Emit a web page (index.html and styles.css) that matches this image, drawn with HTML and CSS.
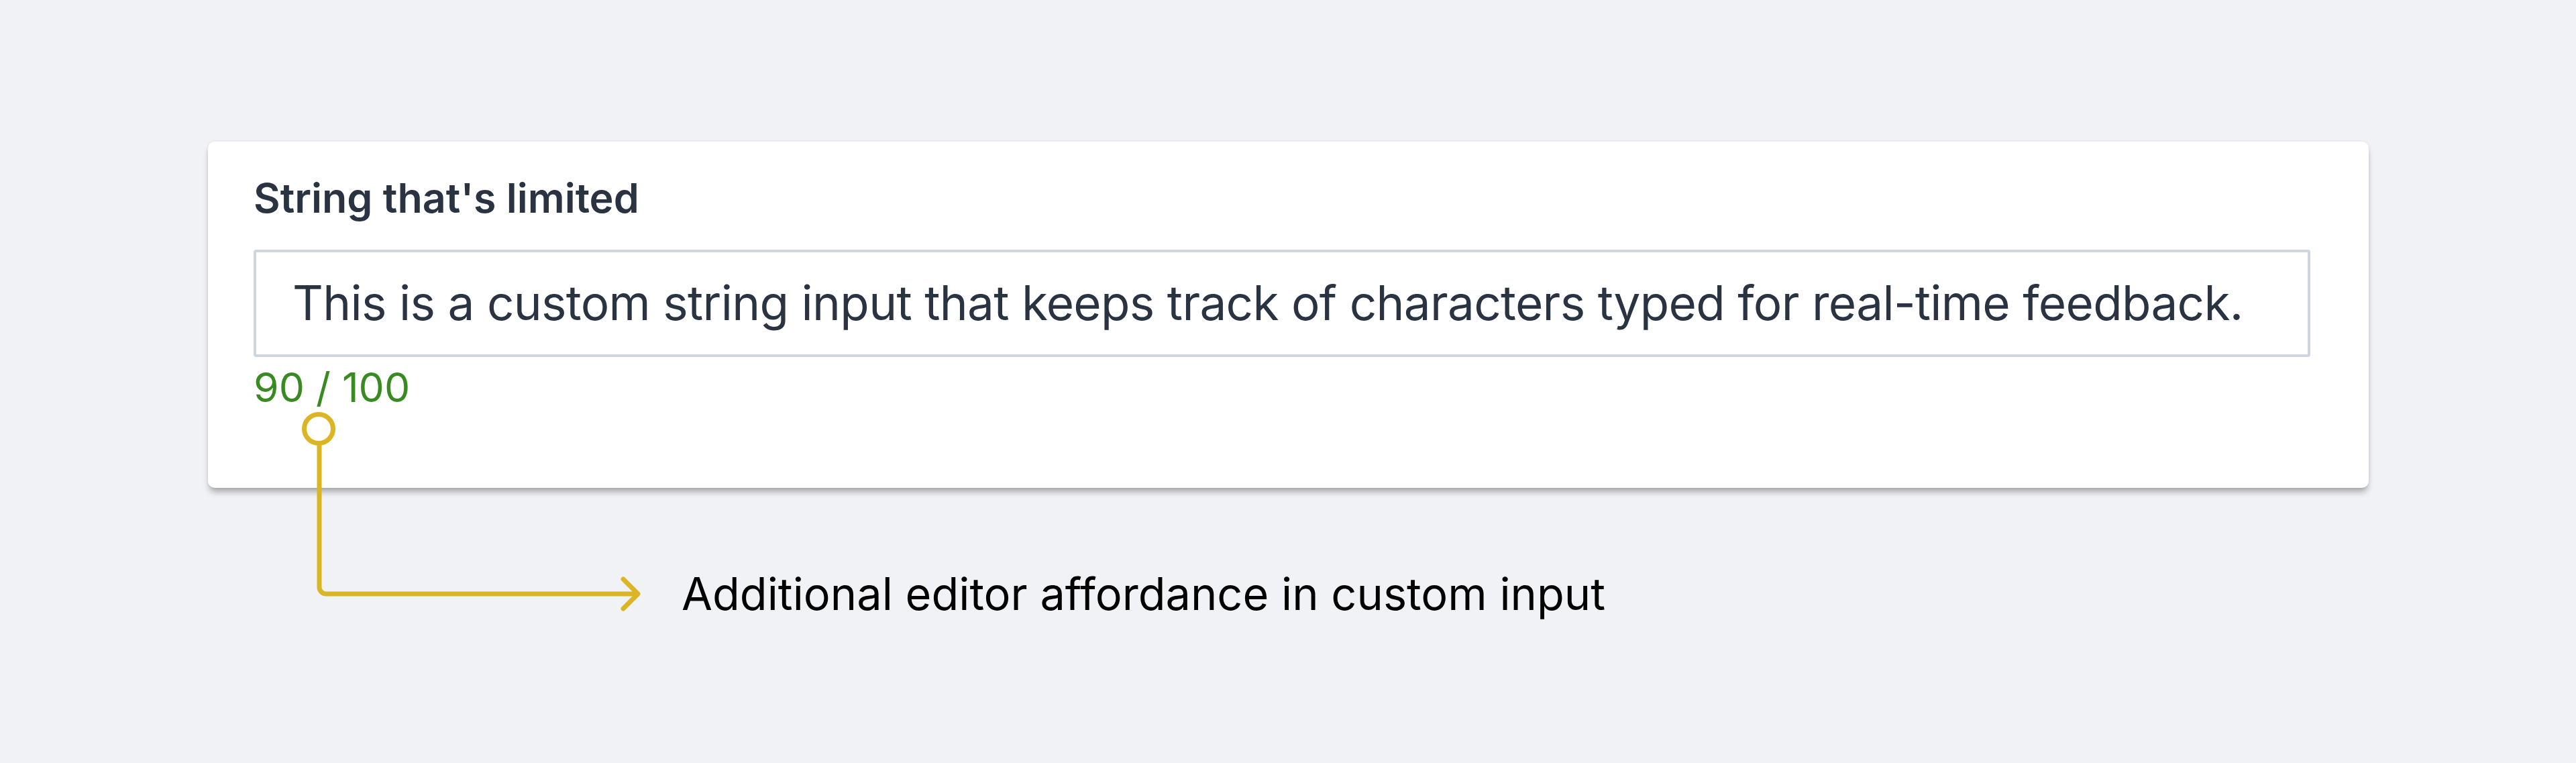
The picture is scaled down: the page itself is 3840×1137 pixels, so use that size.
FILE: index.html
```html
<!DOCTYPE html>
<html lang="en">
<head>
<meta charset="utf-8">
<title>String that's limited</title>
<link rel="stylesheet" href="styles.css">
</head>
<body>
<div class="stage">
  <div class="card">
    <div class="label">String that's limited</div>
    <div class="input">This is a custom string input that keeps track of characters typed for real-time feedback.</div>
    <div class="counter">90 / 100</div>
  </div>
  <div class="note">Additional editor affordance in custom input</div>
  <svg class="connector" width="3840" height="1137" viewBox="0 0 3840 1137" xmlns="http://www.w3.org/2000/svg">
    <circle cx="475" cy="639" r="21.5" fill="none" stroke="#dbb523" stroke-width="7"/>
    <path d="M476 661 V875 A10 10 0 0 0 486 885 H950" fill="none" stroke="#dbb523" stroke-width="7"/>
    <path d="M929 863 L951 885 L929 907" fill="none" stroke="#dbb523" stroke-width="7" stroke-linecap="round" stroke-linejoin="round"/>
  </svg>
</div>
</body>
</html>
```
FILE: styles.css
```css
html, body {
  margin: 0;
  padding: 0;
}
body {
  background: #f1f2f6;
  font-family: Inter, "Noto Sans", "Liberation Sans", sans-serif;
  width: 3840px;
  height: 1137px;
  overflow: hidden;
}
.stage {
  position: relative;
  padding-top: 211px;
  padding-left: 310px;
  height: 100%;
  box-sizing: border-box;
}
.card {
  width: 3221px;
  height: 516px;
  box-sizing: border-box;
  padding: 54px 87px 0 68px;
  background: #ffffff;
  border-radius: 10px;
  box-shadow: 0 8px 10px -2px rgba(0, 0, 0, 0.3), 0 0 5px rgba(0, 0, 0, 0.07);
  display: flex;
  flex-direction: column;
}
.label {
  font-size: 61px;
  line-height: 1;
  font-weight: 600;
  color: #2a3342;
}
.input {
  margin-top: 46px;
  height: 160px;
  box-sizing: border-box;
  border: 4px solid #cfd5df;
  border-radius: 4px;
  padding-left: 54px;
  font-size: 71px;
  letter-spacing: -0.7px;
  line-height: 150px;
  color: #2a3342;
  white-space: nowrap;
}
.counter {
  margin-top: 15px;
  font-size: 60.7px;
  line-height: 1;
  color: #3a8a22;
}
.note {
  margin-top: 125px;
  margin-left: 706px;
  font-size: 66.7px;
  line-height: 1;
  color: #000000;
}
.connector {
  position: absolute;
  left: 0;
  top: 0;
}
```
